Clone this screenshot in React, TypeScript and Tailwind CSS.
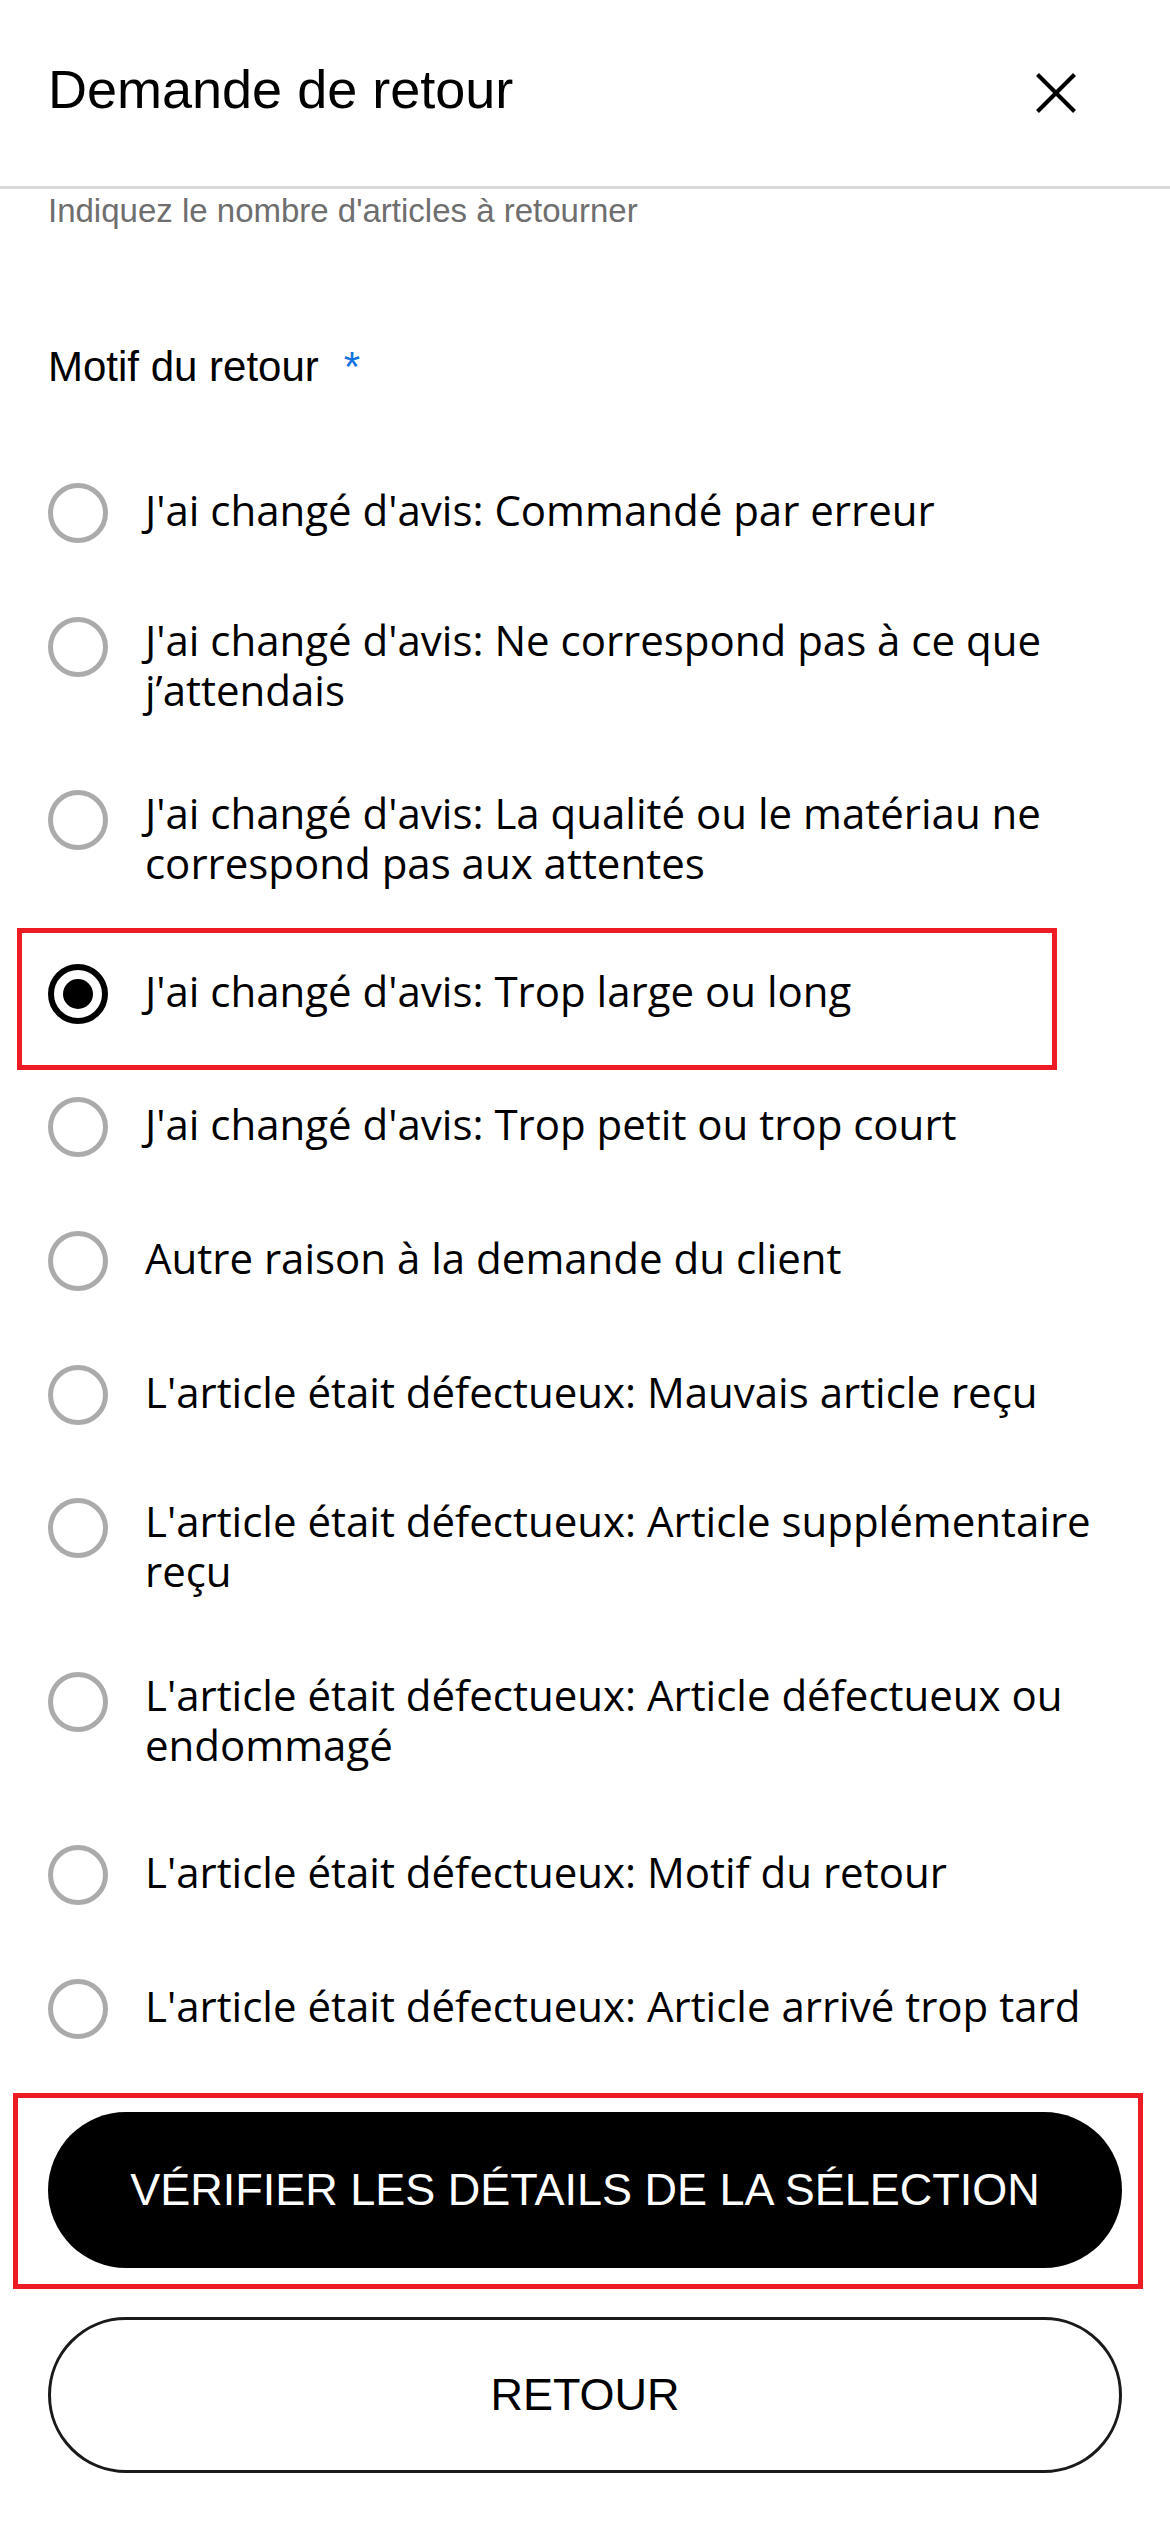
import React from "react";

const reasons = [
  "J'ai changé d'avis: Commandé par erreur",
  "J'ai changé d'avis: Ne correspond pas à ce que j’attendais",
  "J'ai changé d'avis: La qualité ou le matériau ne correspond pas aux attentes",
  "J'ai changé d'avis: Trop large ou long",
  "J'ai changé d'avis: Trop petit ou trop court",
  "Autre raison à la demande du client",
  "L'article était défectueux: Mauvais article reçu",
  "L'article était défectueux: Article supplémentaire reçu",
  "L'article était défectueux: Article défectueux ou endommagé",
  "L'article était défectueux: Motif du retour",
  "L'article était défectueux: Article arrivé trop tard",
];

const SELECTED = 3;

function Radio({ checked }: { checked: boolean }) {
  if (checked) {
    return (
      <span className="flex h-[60px] w-[60px] shrink-0 items-center justify-center rounded-full border-[6px] border-black">
        <span className="h-[30px] w-[30px] rounded-full bg-black" />
      </span>
    );
  }
  return <span className="block h-[60px] w-[60px] shrink-0 rounded-full border-[5px] border-[#ababab]" />;
}

export default function App() {
  return (
    <div className="min-h-[2531px] w-full bg-white text-black">
      {/* Header */}
      <header className="flex h-[189px] items-start justify-between border-b-[3px] border-[#d9d9d9] pl-[48px] pr-[94px]">
        <h1 className="mt-[59px] font-['Liberation_Sans',Arial,sans-serif] text-[54px] font-normal leading-[60px] text-black">
          Demande de retour
        </h1>
        <button className="mt-[73px] h-[40px] w-[40px]" aria-label="Fermer">
          <svg width="40" height="40" viewBox="0 0 40 40" fill="none">
            <line x1="1.5" y1="1.5" x2="38.5" y2="38.5" stroke="black" strokeWidth="4" />
            <line x1="38.5" y1="1.5" x2="1.5" y2="38.5" stroke="black" strokeWidth="4" />
          </svg>
        </button>
      </header>

      <main className="px-[48px]">
        <p className="mt-[3px] font-['Liberation_Sans',Arial,sans-serif] text-[33px] leading-[37px] text-[#6e6e6e]">
          Indiquez le nombre d'articles à retourner
        </p>

        <div className="mt-[114px] flex items-start font-['Liberation_Sans',Arial,sans-serif] text-[42px] leading-[47px] text-black">
          <span>Motif du retour</span>
          <span className="ml-[25px] text-[#1273de]">*</span>
        </div>

        <div className="mt-[93px] flex flex-col gap-[73.6px]">
          {reasons.map((r, i) => (
            <label key={i} className="relative flex items-start gap-[37px]">
              <Radio checked={i === SELECTED} />
              <span className="-mt-[2px] flex min-h-[60px] items-center pb-[2px] font-['Open_Sans','Noto_Sans',sans-serif] text-[42px] leading-[50px] text-black">
                {r}
              </span>
              {i === SELECTED && (
                <span className="pointer-events-none absolute left-[-31px] top-[-36px] h-[142px] w-[1040px] border-[5px] border-[#ed1c24]" />
              )}
            </label>
          ))}
        </div>

        <div className="relative mt-[73px]">
          <button className="flex h-[156px] w-full items-center justify-center rounded-full bg-black font-['Liberation_Sans',Arial,sans-serif] text-[45px] text-white">
            VÉRIFIER LES DÉTAILS DE LA SÉLECTION
          </button>
          <span className="pointer-events-none absolute left-[-35px] top-[-19px] h-[196px] w-[1130px] border-[5px] border-[#ed1c24]" />
        </div>

        <button className="mt-[49px] flex h-[156px] w-full items-center justify-center rounded-full border-[3px] border-[#1a1a1a] bg-white font-['Liberation_Sans',Arial,sans-serif] text-[45px] text-black">
          RETOUR
        </button>
      </main>
    </div>
  );
}
